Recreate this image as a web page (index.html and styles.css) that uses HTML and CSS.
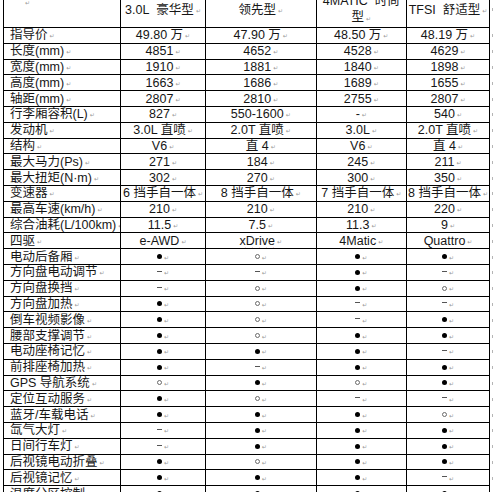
FILE: index.html
```html
<!DOCTYPE html>
<html lang="zh">
<head>
<meta charset="utf-8">
<title>车型配置对比</title>
<link rel="stylesheet" href="styles.css">
</head>
<body>
<div class="spec">
  <div class="cell head corner"><span class="pm"></span></div>
  <div class="cell head">3.0L&nbsp; 豪华型<span class="pm"></span></div>
  <div class="cell head">领先型<span class="pm"></span></div>
  <div class="cell head two">4MATIC&nbsp; 时尚<br>型<span class="pm"></span></div>
  <div class="cell head">TFSI&nbsp; 舒适型<span class="pm"></span></div>
  <div class="eor head"><span class="em"></span></div>

  <div class="cell lbl">指导价<span class="pm"></span></div><div class="cell">49.80 万<span class="pm"></span></div><div class="cell">47.90 万<span class="pm"></span></div><div class="cell">48.50 万<span class="pm"></span></div><div class="cell">48.19 万<span class="pm"></span></div><div class="eor"><span class="em"></span></div>
  <div class="cell lbl">长度(mm)<span class="pm"></span></div><div class="cell">4851<span class="pm"></span></div><div class="cell">4652<span class="pm"></span></div><div class="cell">4528<span class="pm"></span></div><div class="cell">4629<span class="pm"></span></div><div class="eor"><span class="em"></span></div>
  <div class="cell lbl">宽度(mm)<span class="pm"></span></div><div class="cell">1910<span class="pm"></span></div><div class="cell">1881<span class="pm"></span></div><div class="cell">1840<span class="pm"></span></div><div class="cell">1898<span class="pm"></span></div><div class="eor"><span class="em"></span></div>
  <div class="cell lbl">高度(mm)<span class="pm"></span></div><div class="cell">1663<span class="pm"></span></div><div class="cell">1686<span class="pm"></span></div><div class="cell">1689<span class="pm"></span></div><div class="cell">1655<span class="pm"></span></div><div class="eor"><span class="em"></span></div>
  <div class="cell lbl">轴距(mm)<span class="pm"></span></div><div class="cell">2807<span class="pm"></span></div><div class="cell">2810<span class="pm"></span></div><div class="cell">2755<span class="pm"></span></div><div class="cell">2807<span class="pm"></span></div><div class="eor"><span class="em"></span></div>
  <div class="cell lbl">行李厢容积(L)<span class="pm"></span></div><div class="cell">827<span class="pm"></span></div><div class="cell">550-1600<span class="pm"></span></div><div class="cell">-<span class="pm"></span></div><div class="cell">540<span class="pm"></span></div><div class="eor"><span class="em"></span></div>
  <div class="cell lbl">发动机<span class="pm"></span></div><div class="cell">3.0L 直喷<span class="pm"></span></div><div class="cell">2.0T 直喷<span class="pm"></span></div><div class="cell">3.0L<span class="pm"></span></div><div class="cell">2.0T 直喷<span class="pm"></span></div><div class="eor"><span class="em"></span></div>
  <div class="cell lbl">结构<span class="pm"></span></div><div class="cell">V6<span class="pm"></span></div><div class="cell">直 4<span class="pm"></span></div><div class="cell">V6<span class="pm"></span></div><div class="cell">直 4<span class="pm"></span></div><div class="eor"><span class="em"></span></div>
  <div class="cell lbl">最大马力(Ps)<span class="pm"></span></div><div class="cell">271<span class="pm"></span></div><div class="cell">184<span class="pm"></span></div><div class="cell">245<span class="pm"></span></div><div class="cell">211<span class="pm"></span></div><div class="eor"><span class="em"></span></div>
  <div class="cell lbl">最大扭矩(N·m)<span class="pm"></span></div><div class="cell">302<span class="pm"></span></div><div class="cell">270<span class="pm"></span></div><div class="cell">300<span class="pm"></span></div><div class="cell">350<span class="pm"></span></div><div class="eor"><span class="em"></span></div>
  <div class="cell lbl">变速器<span class="pm"></span></div><div class="cell">6 挡手自一体<span class="pm"></span></div><div class="cell">8 挡手自一体<span class="pm"></span></div><div class="cell">7 挡手自一体<span class="pm"></span></div><div class="cell">8 挡手自一体<span class="pm"></span></div><div class="eor"><span class="em"></span></div>
  <div class="cell lbl">最高车速(km/h)<span class="pm"></span></div><div class="cell">210<span class="pm"></span></div><div class="cell">210<span class="pm"></span></div><div class="cell">210<span class="pm"></span></div><div class="cell">220<span class="pm"></span></div><div class="eor"><span class="em"></span></div>
  <div class="cell lbl">综合油耗(L/100km)<span class="pm"></span></div><div class="cell">11.5<span class="pm"></span></div><div class="cell">7.5<span class="pm"></span></div><div class="cell">11.3<span class="pm"></span></div><div class="cell">9<span class="pm"></span></div><div class="eor"><span class="em"></span></div>
  <div class="cell lbl">四驱<span class="pm"></span></div><div class="cell">e-AWD<span class="pm"></span></div><div class="cell"><span class="spell">xDrive</span><span class="pm"></span></div><div class="cell">4Matic<span class="pm"></span></div><div class="cell">Quattro<span class="pm"></span></div><div class="eor"><span class="em"></span></div>
  <div class="cell lbl">电动后备厢<span class="pm"></span></div><div class="cell"><span class="dot"></span><span class="pm"></span></div><div class="cell"><span class="ring"></span><span class="pm"></span></div><div class="cell"><span class="dot"></span><span class="pm"></span></div><div class="cell"><span class="dot"></span><span class="pm"></span></div><div class="eor"><span class="em"></span></div>
  <div class="cell lbl">方向盘电动调节<span class="pm"></span></div><div class="cell"><span class="dash"></span><span class="pm"></span></div><div class="cell"><span class="dash"></span><span class="pm"></span></div><div class="cell"><span class="dot"></span><span class="pm"></span></div><div class="cell"><span class="dash"></span><span class="pm"></span></div><div class="eor"><span class="em"></span></div>
  <div class="cell lbl">方向盘换挡<span class="pm"></span></div><div class="cell"><span class="dash"></span><span class="pm"></span></div><div class="cell"><span class="ring"></span><span class="pm"></span></div><div class="cell"><span class="dot"></span><span class="pm"></span></div><div class="cell"><span class="ring"></span><span class="pm"></span></div><div class="eor"><span class="em"></span></div>
  <div class="cell lbl">方向盘加热<span class="pm"></span></div><div class="cell"><span class="dot"></span><span class="pm"></span></div><div class="cell"><span class="ring"></span><span class="pm"></span></div><div class="cell"><span class="dash"></span><span class="pm"></span></div><div class="cell"><span class="dash"></span><span class="pm"></span></div><div class="eor"><span class="em"></span></div>
  <div class="cell lbl">倒车视频影像<span class="pm"></span></div><div class="cell"><span class="dot"></span><span class="pm"></span></div><div class="cell"><span class="ring"></span><span class="pm"></span></div><div class="cell"><span class="dash"></span><span class="pm"></span></div><div class="cell"><span class="dot"></span><span class="pm"></span></div><div class="eor"><span class="em"></span></div>
  <div class="cell lbl">腰部支撑调节<span class="pm"></span></div><div class="cell"><span class="dot"></span><span class="pm"></span></div><div class="cell"><span class="ring"></span><span class="pm"></span></div><div class="cell"><span class="dot"></span><span class="pm"></span></div><div class="cell"><span class="dot"></span><span class="pm"></span></div><div class="eor"><span class="em"></span></div>
  <div class="cell lbl">电动座椅记忆<span class="pm"></span></div><div class="cell"><span class="dot"></span><span class="pm"></span></div><div class="cell"><span class="dot"></span><span class="pm"></span></div><div class="cell"><span class="dot"></span><span class="pm"></span></div><div class="cell"><span class="dash"></span><span class="pm"></span></div><div class="eor"><span class="em"></span></div>
  <div class="cell lbl">前排座椅加热<span class="pm"></span></div><div class="cell"><span class="dot"></span><span class="pm"></span></div><div class="cell"><span class="dash"></span><span class="pm"></span></div><div class="cell"><span class="dot"></span><span class="pm"></span></div><div class="cell"><span class="dot"></span><span class="pm"></span></div><div class="eor"><span class="em"></span></div>
  <div class="cell lbl">GPS 导航系统<span class="pm"></span></div><div class="cell"><span class="ring"></span><span class="pm"></span></div><div class="cell"><span class="dot"></span><span class="pm"></span></div><div class="cell"><span class="ring"></span><span class="pm"></span></div><div class="cell"><span class="dot"></span><span class="pm"></span></div><div class="eor"><span class="em"></span></div>
  <div class="cell lbl">定位互动服务<span class="pm"></span></div><div class="cell"><span class="dot"></span><span class="pm"></span></div><div class="cell"><span class="ring"></span><span class="pm"></span></div><div class="cell"><span class="dash"></span><span class="pm"></span></div><div class="cell"><span class="dash"></span><span class="pm"></span></div><div class="eor"><span class="em"></span></div>
  <div class="cell lbl">蓝牙/车载电话<span class="pm"></span></div><div class="cell"><span class="dot"></span><span class="pm"></span></div><div class="cell"><span class="dot"></span><span class="pm"></span></div><div class="cell"><span class="dot"></span><span class="pm"></span></div><div class="cell"><span class="ring"></span><span class="pm"></span></div><div class="eor"><span class="em"></span></div>
  <div class="cell lbl">氙气大灯<span class="pm"></span></div><div class="cell"><span class="dash"></span><span class="pm"></span></div><div class="cell"><span class="dot"></span><span class="pm"></span></div><div class="cell"><span class="dot"></span><span class="pm"></span></div><div class="cell"><span class="dot"></span><span class="pm"></span></div><div class="eor"><span class="em"></span></div>
  <div class="cell lbl">日间行车灯<span class="pm"></span></div><div class="cell"><span class="dash"></span><span class="pm"></span></div><div class="cell"><span class="dot"></span><span class="pm"></span></div><div class="cell"><span class="dot"></span><span class="pm"></span></div><div class="cell"><span class="dot"></span><span class="pm"></span></div><div class="eor"><span class="em"></span></div>
  <div class="cell lbl">后视镜电动折叠<span class="pm"></span></div><div class="cell"><span class="dot"></span><span class="pm"></span></div><div class="cell"><span class="ring"></span><span class="pm"></span></div><div class="cell"><span class="dot"></span><span class="pm"></span></div><div class="cell"><span class="dot"></span><span class="pm"></span></div><div class="eor"><span class="em"></span></div>
  <div class="cell lbl">后视镜记忆<span class="pm"></span></div><div class="cell"><span class="dot"></span><span class="pm"></span></div><div class="cell"><span class="dot"></span><span class="pm"></span></div><div class="cell"><span class="dot"></span><span class="pm"></span></div><div class="cell"><span class="dash"></span><span class="pm"></span></div><div class="eor"><span class="em"></span></div>
  <div class="cell lbl">温度分区控制<span class="pm"></span></div><div class="cell"><span class="dot"></span><span class="pm"></span></div><div class="cell"><span class="dot"></span><span class="pm"></span></div><div class="cell"><span class="dot"></span><span class="pm"></span></div><div class="cell"><span class="dot"></span><span class="pm"></span></div><div class="eor"><span class="em"></span></div>
</div>
</body>
</html>
```

FILE: styles.css
```css
html, body {
  margin: 0;
  padding: 0;
  background: #fff;
  overflow: hidden;
}

body {
  font-family: "Liberation Sans", "Noto Sans CJK SC", sans-serif;
  font-size: 12.5px;
  color: #161616;
}

.spec {
  display: grid;
  grid-template-columns: 118px 85px 110.5px 90.5px 83px 3px;
  grid-template-rows: 38px;
  grid-auto-rows: 15.8px;
  margin: -10px 0 0 3px;
  width: 490px;
}

.cell {
  box-sizing: border-box;
  border-right: 1px solid #000;
  border-bottom: 1px solid #000;
  display: flex;
  align-items: center;
  justify-content: center;
  white-space: nowrap;
  overflow: hidden;
  line-height: 12px;
  padding: 0 1px;
}

.cell.head {
  border-top: 1px solid #000;
  line-height: 16px;
  padding-top: 1px;
}

.cell.two {
  text-align: center;
  display: block;
  padding-top: 2px;
}

.cell.lbl,
.cell.corner {
  border-left: 1px solid #000;
  justify-content: flex-start;
  padding-left: 6px;
}

.cell.corner {
  align-items: flex-start;
  padding: 10px 0 0 19px;
  line-height: 8px;
}

.eor {
  display: flex;
  align-items: center;
  justify-content: flex-end;
}

.pm {
  line-height: 0;
}

.pm::after {
  content: "↵";
  font-family: "DejaVu Sans", sans-serif;
  font-size: 6px;
  line-height: 0;
  color: #9a9a9a;
  margin-left: 2px;
}

.em {
  display: inline-block;
  width: 1px;
  height: 3px;
  background: #b5b5b5;
}

.spell {
  text-decoration: underline wavy #d22;
  text-decoration-thickness: 1px;
  text-underline-offset: 2px;
}

.dot,
.ring,
.dash {
  display: inline-block;
  flex: none;
}

.dot {
  width: 5px;
  height: 5px;
  border-radius: 50%;
  background: #000;
}

.ring {
  width: 5px;
  height: 5px;
  border: 1px solid #6a6a6a;
  border-radius: 50%;
  box-sizing: border-box;
}

.dash {
  width: 5px;
  height: 1px;
  background: #555;
  margin-bottom: 2px;
}
```
